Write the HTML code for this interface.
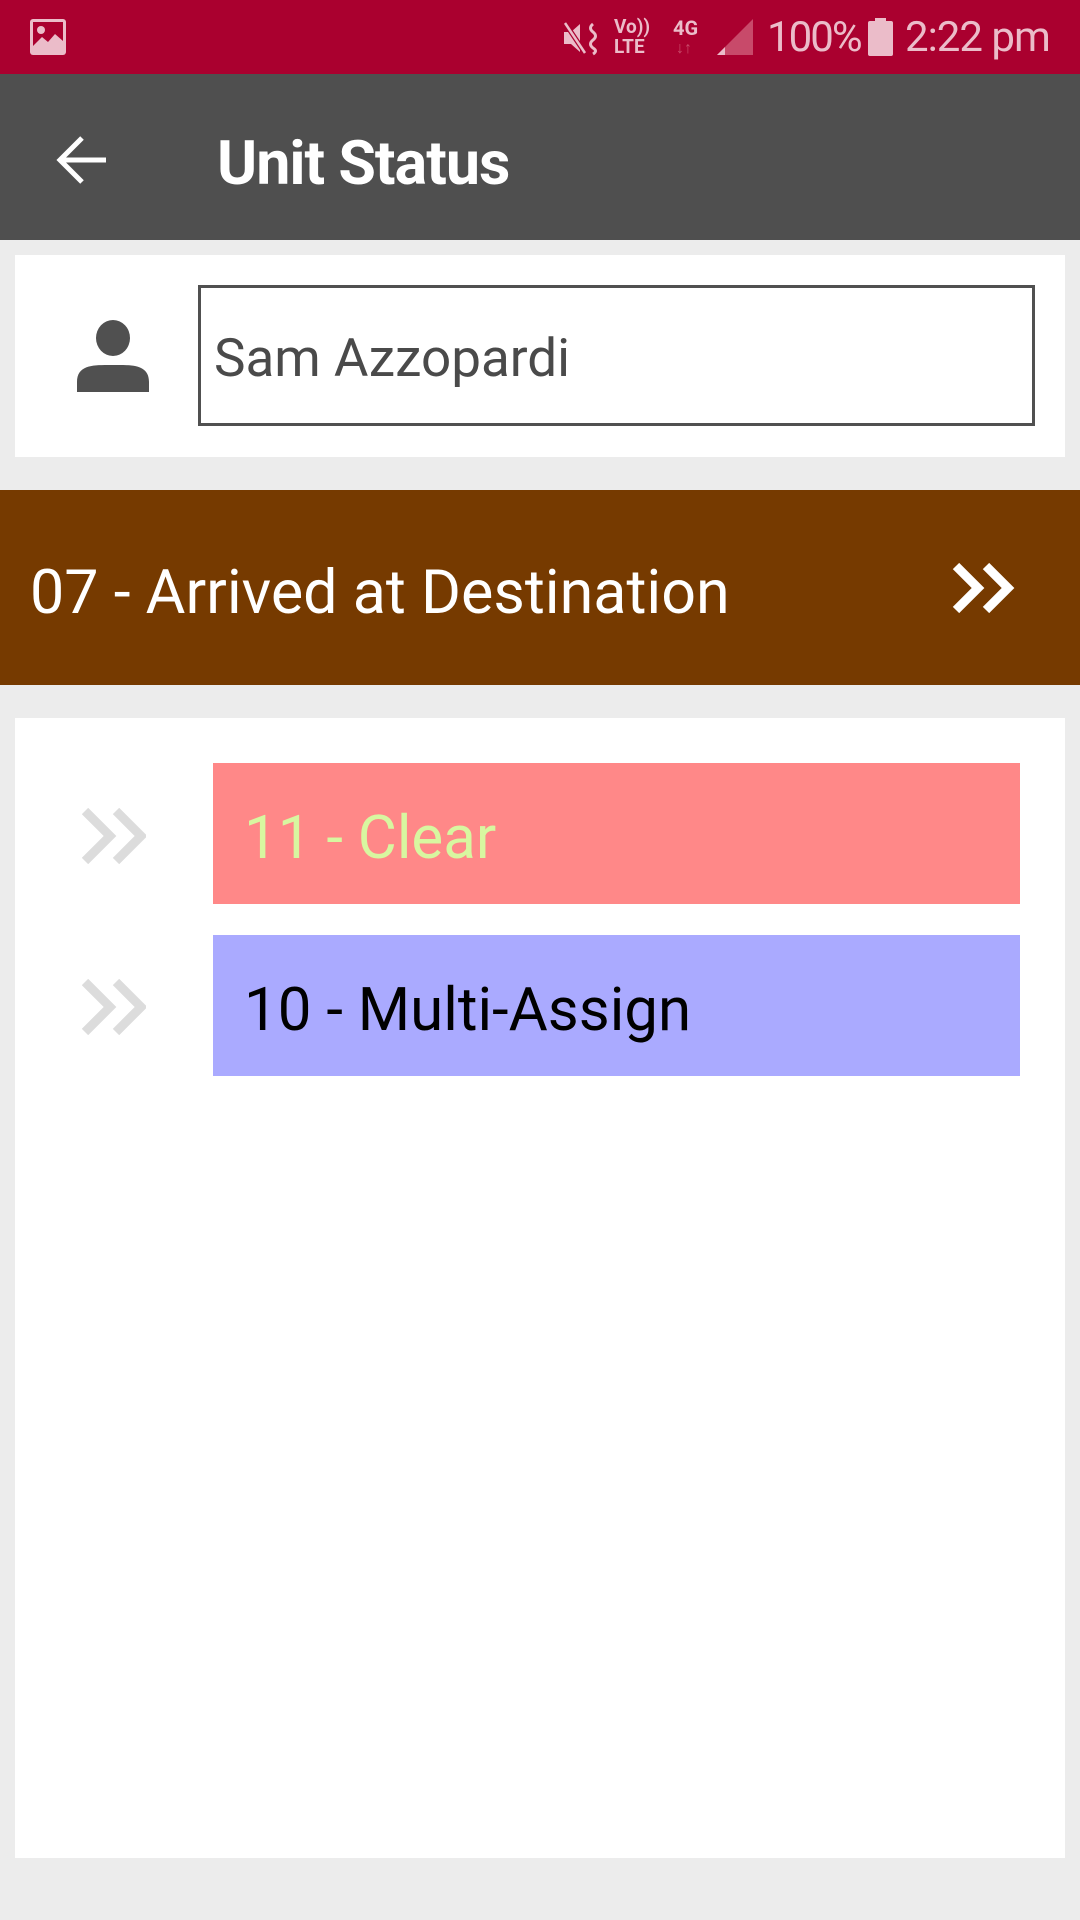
<!DOCTYPE html>
<html><head><meta charset="utf-8"><style>
*{margin:0;padding:0;box-sizing:border-box}
body{width:1080px;height:1920px;background:#ECECEC;position:relative;overflow:hidden;font-family:"Roboto","Liberation Sans",sans-serif}
.abs{position:absolute}
</style></head><body>
<div class="abs" style="left:0;top:0;width:1080px;height:74px;background:#AA002F"></div>
<svg class="abs" style="left:30px;top:19px" width="36" height="36" viewBox="0 0 36 36"><rect x="0" y="0" width="36" height="36" rx="3" fill="#EBBCC9"/><rect x="3" y="3" width="30" height="24" fill="#AA002F"/><circle cx="11" cy="11" r="4" fill="#EBBCC9"/><path d="M3 27 L12 18 L18 23 L25 15 L33 22 L33 33 L3 33Z" fill="#EBBCC9"/></svg>
<svg class="abs" style="left:562px;top:20px" width="40" height="36" viewBox="0 0 40 36"><path d="M2 12h7l9-8v28l-9-8H2z" fill="#EBBCC9"/><path d="M3 3 L23 33" stroke="#AA002F" stroke-width="5"/><path d="M3 3 L23 33" stroke="#EBBCC9" stroke-width="2.5"/><path d="M31 4q-5 4 0 8q5 4 0 8q-5 4 0 8q5 3 0 6" stroke="#EBBCC9" stroke-width="3" fill="none"/></svg>
<div class="abs" style="left:614px;top:17px;color:#EBBCC9;font-weight:bold;font-size:19px;line-height:20px;width:44px">Vo))<br>LTE</div>
<div class="abs" style="left:673px;top:17px;color:#EBBCC9;font-weight:bold;font-size:20px;line-height:22px">4G</div>
<div class="abs" style="left:676px;top:40px;color:#C84A6A;font-size:16px;line-height:16px;font-weight:bold">↓↑</div>
<svg class="abs" style="left:715px;top:19px" width="38" height="38" viewBox="0 0 38 38"><path d="M38 0 L38 36 L2 36Z" fill="#C84A6A"/><path d="M10 28 L10 36 L2 36Z" fill="#EBBCC9"/></svg>
<div class="abs" style="left:767px;top:13px;color:#EBBCC9;font-size:42px;line-height:50px;letter-spacing:-2px">100%</div>
<svg class="abs" style="left:868px;top:18px" width="25" height="38" viewBox="0 0 25 38"><rect x="7" y="0" width="11" height="4" fill="#EBBCC9"/><rect x="0" y="3" width="25" height="35" rx="2" fill="#EBBCC9"/></svg>
<div class="abs" style="left:905px;top:13px;color:#EBBCC9;font-size:42px;line-height:50px;letter-spacing:-1px">2:22 pm</div>
<div class="abs" style="left:0;top:74px;width:1080px;height:166px;background:#4F4F4F"></div>
<svg class="abs" style="left:56px;top:134px" width="52" height="52" viewBox="0 0 52 52"><path d="M50 26H6M26 4L4 26L26 48" stroke="#fff" stroke-width="5" fill="none"/></svg>
<div class="abs" style="left:217px;top:128px;color:#fff;font-size:61px;font-weight:bold;line-height:70px;letter-spacing:-1px">Unit Status</div>
<div class="abs" style="left:15px;top:255px;width:1050px;height:202px;background:#fff"></div>
<svg class="abs" style="left:77px;top:320px" width="72" height="72" viewBox="0 0 72 72"><ellipse cx="36" cy="18" rx="17" ry="18" fill="#505050"/><path d="M0 72V62C0 44 18 45 36 45C54 45 72 44 72 62V72Z" fill="#505050"/></svg>
<div class="abs" style="left:198px;top:285px;width:837px;height:141px;border:3px solid #505050;background:#fff"></div>
<div class="abs" style="left:214px;top:328px;color:#4A4A4A;font-size:53px;line-height:60px">Sam Azzopardi</div>
<div class="abs" style="left:0;top:490px;width:1080px;height:195px;background:#763A00"></div>
<div class="abs" style="left:30px;top:557px;color:#fff;font-size:61px;line-height:70px">07 - Arrived at Destination</div>
<svg class="abs" style="left:952px;top:562px" width="64" height="52" viewBox="0 0 64 52"><path d="M4 4L26 26L4 48M34 4L56 26L34 48" stroke="#fff" stroke-width="9" fill="none"/></svg>
<div class="abs" style="left:15px;top:718px;width:1050px;height:1140px;background:#fff"></div>
<svg class="abs" style="left:82px;top:808px" width="64" height="56" viewBox="0 0 64 56"><path d="M3 3L28 28L3 53M34 3L59 28L34 53" stroke="#DCDCDC" stroke-width="9" fill="none"/></svg>
<svg class="abs" style="left:82px;top:979px" width="64" height="56" viewBox="0 0 64 56"><path d="M3 3L28 28L3 53M34 3L59 28L34 53" stroke="#DCDCDC" stroke-width="9" fill="none"/></svg>
<div class="abs" style="left:213px;top:763px;width:807px;height:141px;background:#FF8888"></div>
<div class="abs" style="left:244px;top:803px;color:#D8F7A0;font-size:60px;line-height:70px">11 - Clear</div>
<div class="abs" style="left:213px;top:935px;width:807px;height:141px;background:#AAAAFF"></div>
<div class="abs" style="left:244px;top:975px;color:#000;font-size:60px;line-height:70px">10 - Multi-Assign</div>
</body></html>
